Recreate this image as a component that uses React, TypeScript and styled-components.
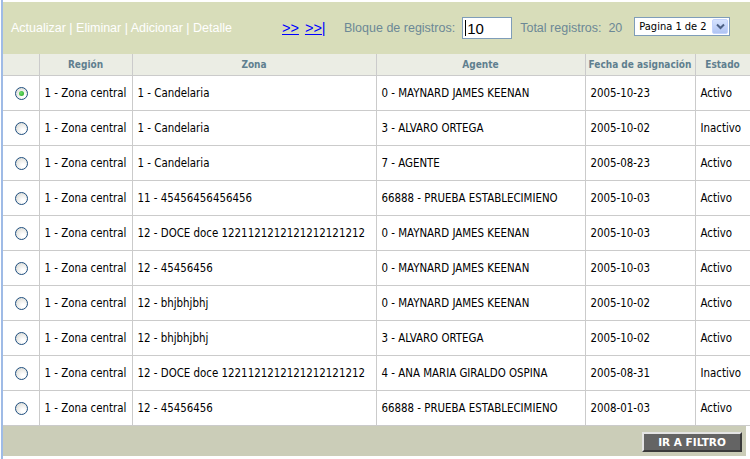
import React from "react";
import styled, { createGlobalStyle } from "styled-components";

const Global = createGlobalStyle`
  html, body { margin: 0; padding: 0; background: #ffffff; }
  body { font-family: "DejaVu Sans Condensed", "DejaVu Sans", sans-serif; }
`;

const Frame = styled.div`
  margin-left: 1px;
  border-left: 2px solid #9fbbe6;
  padding-top: 2px;
  width: 747px;
  height: 457px;
`;

const Toolbar = styled.div`
  height: 52px;
  background: #d8ddba;
  display: flex;
  align-items: center;
  padding-left: 8px;
  box-sizing: border-box;
  font-family: "Liberation Sans", Arial, sans-serif;
  font-size: 12.5px;
`;

const Actions = styled.div`
  color: #ffffff;
  width: 271px;
  white-space: nowrap;
`;

const NavLink = styled.a`
  color: #0000ff;
  text-decoration: underline;
  font-size: 14.5px;
  margin-right: 6px;
  cursor: pointer;
`;

const Muted = styled.span`
  color: #6c8896;
  white-space: nowrap;
`;

const Navs = styled.div`
  display: flex;
  width: 62px;
`;

const Input = styled.div`
  width: 46px;
  height: 20px;
  border: 1px solid #7f9db9;
  background: #fff;
  margin: 0 8px 0 7px;
  display: flex;
  align-items: center;
  font-size: 15px;
  color: #000;
  padding-left: 2px;
  box-sizing: content-box;
`;

const Caret = styled.span`
  display: inline-block;
  width: 1px;
  height: 16px;
  background: #000;
  margin-right: 1px;
`;

const Select = styled.div`
  margin-left: 12px;
  width: 90px;
  height: 17px;
  border: 1px solid #7f9db9;
  background: #fff;
  display: flex;
  align-items: center;
  justify-content: space-between;
  font-family: "DejaVu Sans Condensed", "DejaVu Sans", sans-serif;
  font-size: 11px;
  color: #000;
  padding-left: 4px;
  margin-bottom: 4px;
`;

const SelBtn = styled.div`
  width: 16px;
  height: 15px;
  margin-right: 1px;
  background: linear-gradient(#d6e3fe, #b0c4f3);
  border: 1px solid #c3d3fd;
  box-sizing: border-box;
  border-radius: 2px;
  display: flex;
  align-items: center;
  justify-content: center;
`;

const Table = styled.table`
  border-collapse: collapse;
  table-layout: fixed;
  width: 747px;
  font-family: "DejaVu Sans Condensed", "DejaVu Sans", sans-serif;
  font-size: 11.4px;
`;

const Th = styled.th`
  background: #ebede4;
  color: #5f7f8f;
  font-weight: bold;
  height: 21px;
  padding: 0;
  border: 1px solid #cbcbcb;
  border-top: none;
  text-align: center;
  font-size: 10px;
  white-space: nowrap;
  &:first-child { border-left: none; }
`;

const Td = styled.td`
  height: 34px;
  padding: 0 0 0 5px;
  border: 1px solid #cbcbcb;
  color: #000;
  white-space: nowrap;
  overflow: hidden;
  &:first-child { border-left: none; padding: 0 0 0 1px; text-align: center; }
`;

const Radio = styled.span<{ $on?: boolean }>`
  display: inline-flex;
  align-items: center;
  justify-content: center;
  width: 11px;
  height: 11px;
  border-radius: 50%;
  border: 1px solid #1f4f80;
  background: radial-gradient(circle at 65% 70%, #ffffff 15%, #d6d6cf 95%);
  vertical-align: middle;
  margin-top: 1px;
  &::after {
    content: "";
    display: ${(p) => (p.$on ? "block" : "none")};
    width: 5px;
    height: 5px;
    border-radius: 50%;
    background: radial-gradient(circle at 40% 40%, #6ee06e, #1f9e1f);
  }
`;

const Footer = styled.div`
  height: 30px;
  width: 743px;
  background: #cbcdb8;
  display: flex;
  align-items: center;
  justify-content: flex-end;
  padding-right: 4px;
  box-sizing: border-box;
`;

const Button = styled.button`
  width: 100px;
  height: 20px;
  background: #646464;
  color: #fff;
  font-family: "DejaVu Sans", Verdana, sans-serif;
  font-weight: bold;
  font-size: 10.5px;
  border-style: solid;
  border-width: 2px;
  border-color: #e4e4e4 #3a3a3a #3a3a3a #e4e4e4;
  padding: 0;
  margin-top: 1px;
`;

const rows = [
  ["1 - Zona central", "1 - Candelaria", "0 - MAYNARD JAMES KEENAN", "2005-10-23", "Activo"],
  ["1 - Zona central", "1 - Candelaria", "3 - ALVARO ORTEGA", "2005-10-02", "Inactivo"],
  ["1 - Zona central", "1 - Candelaria", "7 - AGENTE", "2005-08-23", "Activo"],
  ["1 - Zona central", "11 - 45456456456456", "66888 - PRUEBA ESTABLECIMIENO", "2005-10-03", "Activo"],
  ["1 - Zona central", "12 - DOCE doce 1221121212121212121212", "0 - MAYNARD JAMES KEENAN", "2005-10-03", "Activo"],
  ["1 - Zona central", "12 - 45456456", "0 - MAYNARD JAMES KEENAN", "2005-10-03", "Activo"],
  ["1 - Zona central", "12 - bhjbhjbhj", "0 - MAYNARD JAMES KEENAN", "2005-10-02", "Activo"],
  ["1 - Zona central", "12 - bhjbhjbhj", "3 - ALVARO ORTEGA", "2005-10-02", "Activo"],
  ["1 - Zona central", "12 - DOCE doce 1221121212121212121212", "4 - ANA MARIA GIRALDO OSPINA", "2005-08-31", "Inactivo"],
  ["1 - Zona central", "12 - 45456456", "66888 - PRUEBA ESTABLECIMIENO", "2008-01-03", "Activo"],
];

const widths = [36, 93, 244, 209, 110, 55];

export default function App() {
  return (
    <>
      <Global />
      <Frame>
        <Toolbar>
          <Actions>Actualizar | Eliminar | Adicionar | Detalle</Actions>
          <Navs>
            <NavLink>&gt;&gt;</NavLink>
            <NavLink>&gt;&gt;|</NavLink>
          </Navs>
          <Muted>Bloque de registros:</Muted>
          <Input>
            <Caret />
            10
          </Input>
          <Muted>Total registros:&nbsp; 20</Muted>
          <Select>
            <span>Pagina 1 de 2</span>
            <SelBtn>
              <svg width="9" height="7" viewBox="0 0 9 7">
                <path d="M1 1.5 L4.5 5 L8 1.5" fill="none" stroke="#4d6185" strokeWidth="2" />
              </svg>
            </SelBtn>
          </Select>
        </Toolbar>
        <Table>
          <colgroup>
            {widths.map((w, i) => (
              <col key={i} style={{ width: w }} />
            ))}
          </colgroup>
          <thead>
            <tr>
              <Th></Th>
              <Th>Región</Th>
              <Th>Zona</Th>
              <Th>Agente</Th>
              <Th>Fecha de asignación</Th>
              <Th>Estado</Th>
            </tr>
          </thead>
          <tbody>
            {rows.map((r, i) => (
              <tr key={i}>
                <Td>
                  <Radio $on={i === 0} />
                </Td>
                {r.map((c, j) => (
                  <Td key={j}>{c}</Td>
                ))}
              </tr>
            ))}
          </tbody>
        </Table>
        <Footer>
          <Button>IR A FILTRO</Button>
        </Footer>
      </Frame>
    </>
  );
}
